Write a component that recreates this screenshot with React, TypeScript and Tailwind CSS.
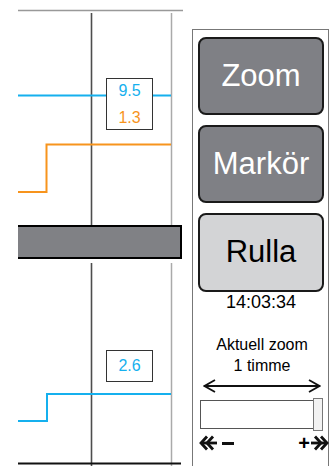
import React from "react";

const font = { fontFamily: '"Liberation Sans", Arial, sans-serif' };

function ValueBox({ values, className }: { values: { v: string; c: string }[]; className: string }) {
  return (
    <div
      className={`absolute flex flex-col items-center justify-center gap-[7px] border-[1.5px] border-[#333] bg-white ${className}`}
    >
      {values.map((x) => (
        <span key={x.v} className={`text-[16px] leading-[20px] ${x.c}`}>
          {x.v}
        </span>
      ))}
    </div>
  );
}

function DoubleChevron({ dir }: { dir: "left" | "right" }) {
  return (
    <svg width="18" height="16" viewBox="0 0 18 16" className={dir === "right" ? "-scale-x-100" : ""}>
      <g fill="none" stroke="#111" strokeWidth="2.8" strokeLinecap="butt" strokeLinejoin="miter">
        <polyline points="8,1.5 2,8 8,14.5" />
        <polyline points="14,1.5 8,8 14,14.5" />
        <line x1="2" y1="8" x2="18" y2="8" />
      </g>
    </svg>
  );
}

export default function App() {
  return (
    <div className="flex h-[466px] w-[329px] overflow-hidden bg-white text-black" style={font}>
      {/* Left chart column */}
      <div className="flex w-[192px] flex-col">
        {/* Top pane */}
        <div className="relative h-[225px]">
          <svg width="192" height="225" className="absolute left-0 top-0">
            <line x1="18" y1="10.5" x2="183" y2="10.5" stroke="#999" strokeWidth="1.5" />
            <line x1="91.5" y1="13" x2="91.5" y2="225" stroke="#4d4d4d" strokeWidth="1.6" />
            <line x1="171.5" y1="13" x2="171.5" y2="225" stroke="#aaa" strokeWidth="1.5" />
            <line x1="18" y1="95.5" x2="171" y2="95.5" stroke="#15b0ee" strokeWidth="2" />
            <polyline
              points="18,192 46.5,192 46.5,144.5 171,144.5"
              fill="none"
              stroke="#f7941d"
              strokeWidth="2"
            />
          </svg>
          <ValueBox
            className="left-[106px] top-[78px] h-[52px] w-[47px]"
            values={[
              { v: "9.5", c: "text-[#15b0ee]" },
              { v: "1.3", c: "text-[#f7941d]" },
            ]}
          />
        </div>

        {/* Splitter bar */}
        <div className="ml-[18px] h-[34px] w-[164px] border-y-2 border-r-2 border-black bg-[#808185]" />

        {/* Bottom pane */}
        <div className="relative flex-1">
          <svg width="192" height="207" className="absolute left-0 top-0">
            <line x1="91.5" y1="4" x2="91.5" y2="207" stroke="#4d4d4d" strokeWidth="1.6" />
            <line x1="171.5" y1="4" x2="171.5" y2="207" stroke="#aaa" strokeWidth="1.5" />
            <polyline
              points="18,162 47,162 47,135 171,135"
              fill="none"
              stroke="#15b0ee"
              strokeWidth="2"
            />
            <line x1="18" y1="204.5" x2="181" y2="204.5" stroke="#111" strokeWidth="2" />
          </svg>
          <ValueBox className="left-[106px] top-[91px] h-[32px] w-[47px]" values={[{ v: "2.6", c: "text-[#15b0ee]" }]} />
        </div>
      </div>

      {/* Right control panel */}
      <div className="mt-[29px] flex w-[137px] flex-col border-x border-t border-[#777] pl-[5px] pt-[7px]">
        <button className="flex h-[78px] w-[126px] items-center justify-center rounded-[8px] border-2 border-[#1a1a1a] bg-[#7f8085] text-[31px] text-white">
          Zoom
        </button>
        <button className="mt-[10px] flex h-[78px] w-[126px] items-center justify-center rounded-[8px] border-2 border-[#1a1a1a] bg-[#7f8085] text-[31px] text-white">
          Markör
        </button>
        <button className="mt-[10px] flex h-[79px] w-[126px] items-center justify-center rounded-[8px] border-2 border-[#1a1a1a] bg-[#d3d4d6] text-[31px] text-black">
          Rulla
        </button>
        <div className="w-[126px] text-center text-[18px] leading-[21px]">14:03:34</div>
        <div className="mt-[21px] w-[126px] pl-[2px] text-center text-[16px] leading-[21px]">
          <div>Aktuell zoom</div>
          <div>1 timme</div>
        </div>
        <div className="ml-[5px] mt-[3px]">
          <svg width="118" height="14" viewBox="0 0 118 14">
            <g fill="none" stroke="#111" strokeWidth="1.8">
              <line x1="1" y1="7" x2="117" y2="7" />
              <polyline points="12,1 1.5,7 12,13" />
              <polyline points="106,1 116.5,7 106,13" />
            </g>
          </svg>
        </div>
        <div className="ml-[2px] mt-[5px] flex h-[33px] w-[123px] items-center">
          <div className="h-[29px] flex-1 border border-[#555] bg-white" />
          <div className="-ml-px h-[33px] w-[10px] border border-[#777] bg-[#f2f2f2]" />
        </div>
        <div className="ml-[1px] mt-[4px] flex h-[16px] w-[130px] items-center justify-between">
          <div className="flex items-center">
            <DoubleChevron dir="left" />
            <div className="ml-[5px] h-[3px] w-[12px] bg-[#111]" aria-label="−" />
          </div>
          <div className="flex items-center">
            <span className="mr-[1px] text-[20px] font-bold leading-[16px]">+</span>
            <DoubleChevron dir="right" />
          </div>
        </div>
      </div>
    </div>
  );
}
